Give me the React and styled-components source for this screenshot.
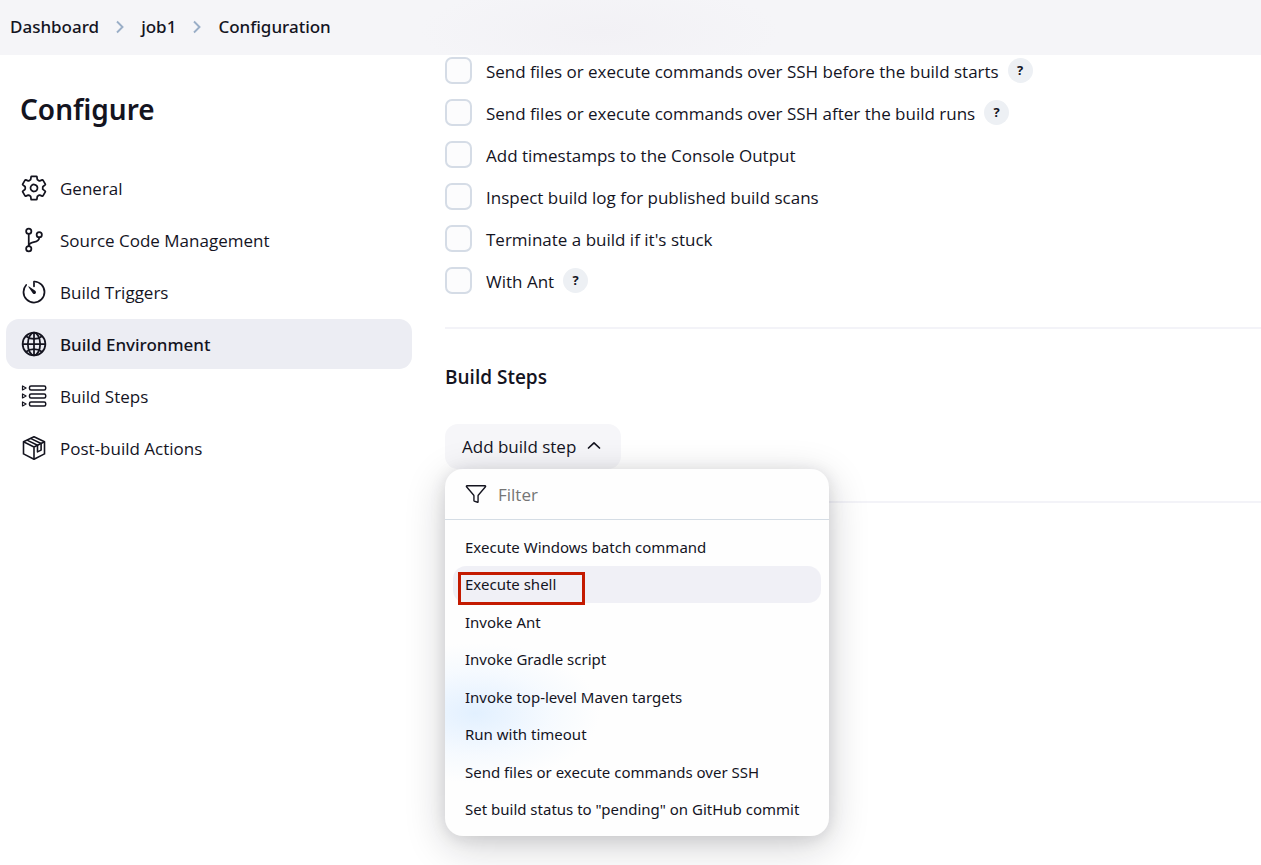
import React, { useState } from 'react';
import styled, { createGlobalStyle } from 'styled-components';
import {
  IoSettingsOutline,
  IoGitBranchOutline,
  IoTimerOutline,
  IoGlobeOutline,
  IoFunnelOutline,
} from 'react-icons/io5';

const textFont = "'Segoe UI', 'Open Sans', sans-serif";
const uiFont = "'Segoe UI', 'Noto Sans', sans-serif";

const GlobalStyle = createGlobalStyle`
  * {
    box-sizing: border-box;
  }
  body {
    margin: 0;
    background: #fff;
    color: #14141f;
    font-family: ${textFont};
    font-size: 17px;
  }
  button,
  input {
    font-family: inherit;
    font-size: inherit;
    color: inherit;
  }
`;

const Page = styled.div`
  min-height: 100vh;
  overflow: hidden;
`;

const Breadcrumbs = styled.nav`
  display: flex;
  align-items: center;
  gap: 16px;
  height: 55px;
  padding: 0 10px 2px;
  background: radial-gradient(ellipse 180px 50px at 600px 32px, #f2f1f5, #f5f5f8);
  font-family: ${uiFont};

  a {
    color: inherit;
    font-weight: 500;
    text-decoration: none;
  }
  svg {
    flex: none;
    color: #9aaec7;
  }
`;

const Layout = styled.div`
  display: flex;
  align-items: flex-start;
  gap: 33px;
`;

const Sidebar = styled.aside`
  flex: 0 0 412px;
  padding: 34px 0 0 6px;
`;

const Title = styled.h1`
  margin: 0 0 34px;
  padding-left: 14px;
  font-family: ${uiFont};
  font-size: 28px;
  font-weight: 600;
  line-height: 40px;
`;

const TaskList = styled.ul`
  display: flex;
  flex-direction: column;
  gap: 2px;
  margin: 0;
  padding: 0;
  list-style: none;
`;

const Task = styled.a`
  display: flex;
  align-items: center;
  gap: 12px;
  height: 50px;
  padding: 0 14px;
  border-radius: 13px;
  background: ${p => (p.$active ? '#ecedf3' : 'transparent')};
  color: inherit;
  font-family: ${p => (p.$active ? uiFont : textFont)};
  font-weight: ${p => (p.$active ? 500 : 400)};
  text-decoration: none;

  svg {
    flex: none;
    width: 28px;
    height: 28px;
  }
`;

const Main = styled.main`
  flex: 1;
  min-width: 0;
`;

const Options = styled.div`
  display: flex;
  flex-direction: column;
  gap: 12px;
`;

const Option = styled.div`
  display: flex;
  align-items: center;
  height: 30px;

  input {
    appearance: none;
    flex: none;
    width: 27px;
    height: 27px;
    margin: 0 14px 0 0;
    border: 2px solid #d5dce6;
    border-radius: 7px;
    background: #fcfcfd;
  }
  label {
    padding-top: 2px;
  }
`;

const Help = styled.button`
  width: 25px;
  height: 25px;
  margin-left: 9px;
  padding: 0;
  border: 0;
  border-radius: 50%;
  background: #edf0f4;
  font-size: 13px;
  font-weight: 700;
  line-height: 25px;
`;

const Divider = styled.hr`
  height: 2px;
  margin: 32px 0 0;
  border: 0;
  background: #f3f3f8;
`;

const SectionTitle = styled.h2`
  margin: 34px 0 33px;
  font-size: 19px;
  font-weight: 600;
  line-height: 28px;
`;

const Dropdown = styled.div`
  position: relative;
`;

const AddButton = styled.button`
  display: flex;
  align-items: center;
  gap: 11px;
  height: 45px;
  padding: 0 20px 0 17px;
  border: 0;
  border-radius: 13px;
  background: #f6f6f9;
`;

const Menu = styled.div`
  position: absolute;
  top: 100%;
  left: 0;
  width: 384px;
  border-radius: 18px;
  background: radial-gradient(
      ellipse 125px 70px at 30px 244px,
      #e2f0ff,
      rgba(240, 247, 255, 0.6) 60%,
      transparent
    ),
    #fefefe;
  box-shadow: 0 10px 40px rgba(20, 20, 31, 0.2), 0 2px 16px rgba(20, 20, 31, 0.1);
`;

const Filter = styled.label`
  display: flex;
  align-items: center;
  gap: 11px;
  height: 51px;
  padding: 0 20px;
  border-bottom: 1px solid #d5dde5;

  input {
    flex: 1;
    min-width: 0;
    padding: 0;
    border: 0;
    outline: none;
    background: none;
  }
  input::placeholder {
    color: #757575;
    opacity: 1;
  }
`;

const Steps = styled.ul`
  display: grid;
  grid-auto-rows: 1fr;
  height: 316px;
  margin: 0;
  padding: 8px;
  list-style: none;

  li {
    position: relative;
  }
`;

const Step = styled.button`
  width: 100%;
  height: 100%;
  padding: 0 12px;
  border: 0;
  border-radius: 13px;
  background: ${p => (p.$active ? 'rgba(237, 237, 244, 0.85)' : 'none')};
  font-family: ${uiFont};
  font-size: 15px;
  text-align: left;
  white-space: nowrap;
`;

const Marker = styled.span`
  position: absolute;
  top: 6px;
  left: 5px;
  width: 127px;
  height: 33px;
  border: 3px solid #c41a00;
  pointer-events: none;
`;

function Chevron() {
  return (
    <svg width="10" height="14" viewBox="0 0 10 14" fill="none">
      <path d="M2 1.5 7.5 7 2 12.5" stroke="currentColor" strokeWidth="1.9" />
    </svg>
  );
}

function StepsIcon() {
  return (
    <svg
      viewBox="-1.5 -1.5 28 28"
      fill="none"
      stroke="currentColor"
      strokeWidth="1.5"
    >
      {[4.5, 12.5, 20.5].map(y => (
        <g key={y}>
          <path
            d={`M1 ${y - 2}v4L4.6 ${y}z`}
            strokeWidth="1.2"
            strokeLinejoin="round"
          />
          <rect x="8" y={y - 2} width="16.2" height="4" rx="1.5" />
        </g>
      ))}
    </svg>
  );
}

function PackageIcon() {
  return (
    <svg
      viewBox="-1.5 -1.5 28 28"
      fill="none"
      stroke="currentColor"
      strokeWidth="1.6"
      strokeLinejoin="round"
    >
      <path d="M12.5 1.2 23 6.2v12.2L12.5 23.8 2 18.4V6.2z" />
      <path d="M2 6.2 12.5 11.5 23 6.2M12.5 11.5v12.3" />
      <path d="M5.5 4.6 16 9.8v6.6l3.6-1.8V8L9 2.9" />
    </svg>
  );
}

const tasks = [
  { label: 'General', icon: <IoSettingsOutline /> },
  { label: 'Source Code Management', icon: <IoGitBranchOutline /> },
  { label: 'Build Triggers', icon: <IoTimerOutline /> },
  { label: 'Build Environment', icon: <IoGlobeOutline />, active: true },
  { label: 'Build Steps', icon: <StepsIcon /> },
  { label: 'Post-build Actions', icon: <PackageIcon /> },
];

const options = [
  { label: 'Send files or execute commands over SSH before the build starts', help: true },
  { label: 'Send files or execute commands over SSH after the build runs', help: true },
  { label: 'Add timestamps to the Console Output' },
  { label: 'Inspect build log for published build scans' },
  { label: "Terminate a build if it's stuck" },
  { label: 'With Ant', help: true },
];

const steps = [
  'Execute Windows batch command',
  'Execute shell',
  'Invoke Ant',
  'Invoke Gradle script',
  'Invoke top-level Maven targets',
  'Run with timeout',
  'Send files or execute commands over SSH',
  'Set build status to "pending" on GitHub commit',
];

export default function App() {
  const [open, setOpen] = useState(true);
  const [filter, setFilter] = useState('');
  const shown = steps.filter(s => s.toLowerCase().includes(filter.toLowerCase()));

  return (
    <Page>
      <GlobalStyle />
      <Breadcrumbs aria-label="Breadcrumb">
        <a href="#dashboard">Dashboard</a>
        <Chevron />
        <a href="#job1">job1</a>
        <Chevron />
        <a href="#configuration">Configuration</a>
      </Breadcrumbs>

      <Layout>
        <Sidebar>
          <Title>Configure</Title>
          <TaskList>
            {tasks.map(t => (
              <li key={t.label}>
                <Task href="#" $active={t.active}>
                  {t.icon}
                  {t.label}
                </Task>
              </li>
            ))}
          </TaskList>
        </Sidebar>

        <Main>
          <Options>
            {options.map((o, i) => (
              <Option key={o.label}>
                <input type="checkbox" id={`option-${i}`} />
                <label htmlFor={`option-${i}`}>{o.label}</label>
                {o.help && (
                  <Help type="button" aria-label={`Help for ${o.label}`}>
                    ?
                  </Help>
                )}
              </Option>
            ))}
          </Options>

          <Divider />
          <SectionTitle>Build Steps</SectionTitle>

          <Dropdown>
            <AddButton type="button" aria-expanded={open} onClick={() => setOpen(!open)}>
              Add build step
              <svg width="14" height="12" viewBox="0 0 14 12" fill="none">
                <path
                  d="M1.5 7 7 1.8 12.5 7"
                  stroke="currentColor"
                  strokeWidth="1.7"
                  strokeLinecap="round"
                  strokeLinejoin="round"
                />
              </svg>
            </AddButton>
            {open && (
              <Menu>
                <Filter>
                  <IoFunnelOutline size={22} />
                  <input
                    type="text"
                    placeholder="Filter"
                    aria-label="Filter"
                    value={filter}
                    onChange={e => setFilter(e.target.value)}
                  />
                </Filter>
                <Steps>
                  {shown.map(s => (
                    <li key={s}>
                      <Step type="button" $active={s === 'Execute shell'}>
                        {s}
                      </Step>
                      {s === 'Execute shell' && <Marker />}
                    </li>
                  ))}
                </Steps>
              </Menu>
            )}
          </Dropdown>

          <Divider />
        </Main>
      </Layout>
    </Page>
  );
}
